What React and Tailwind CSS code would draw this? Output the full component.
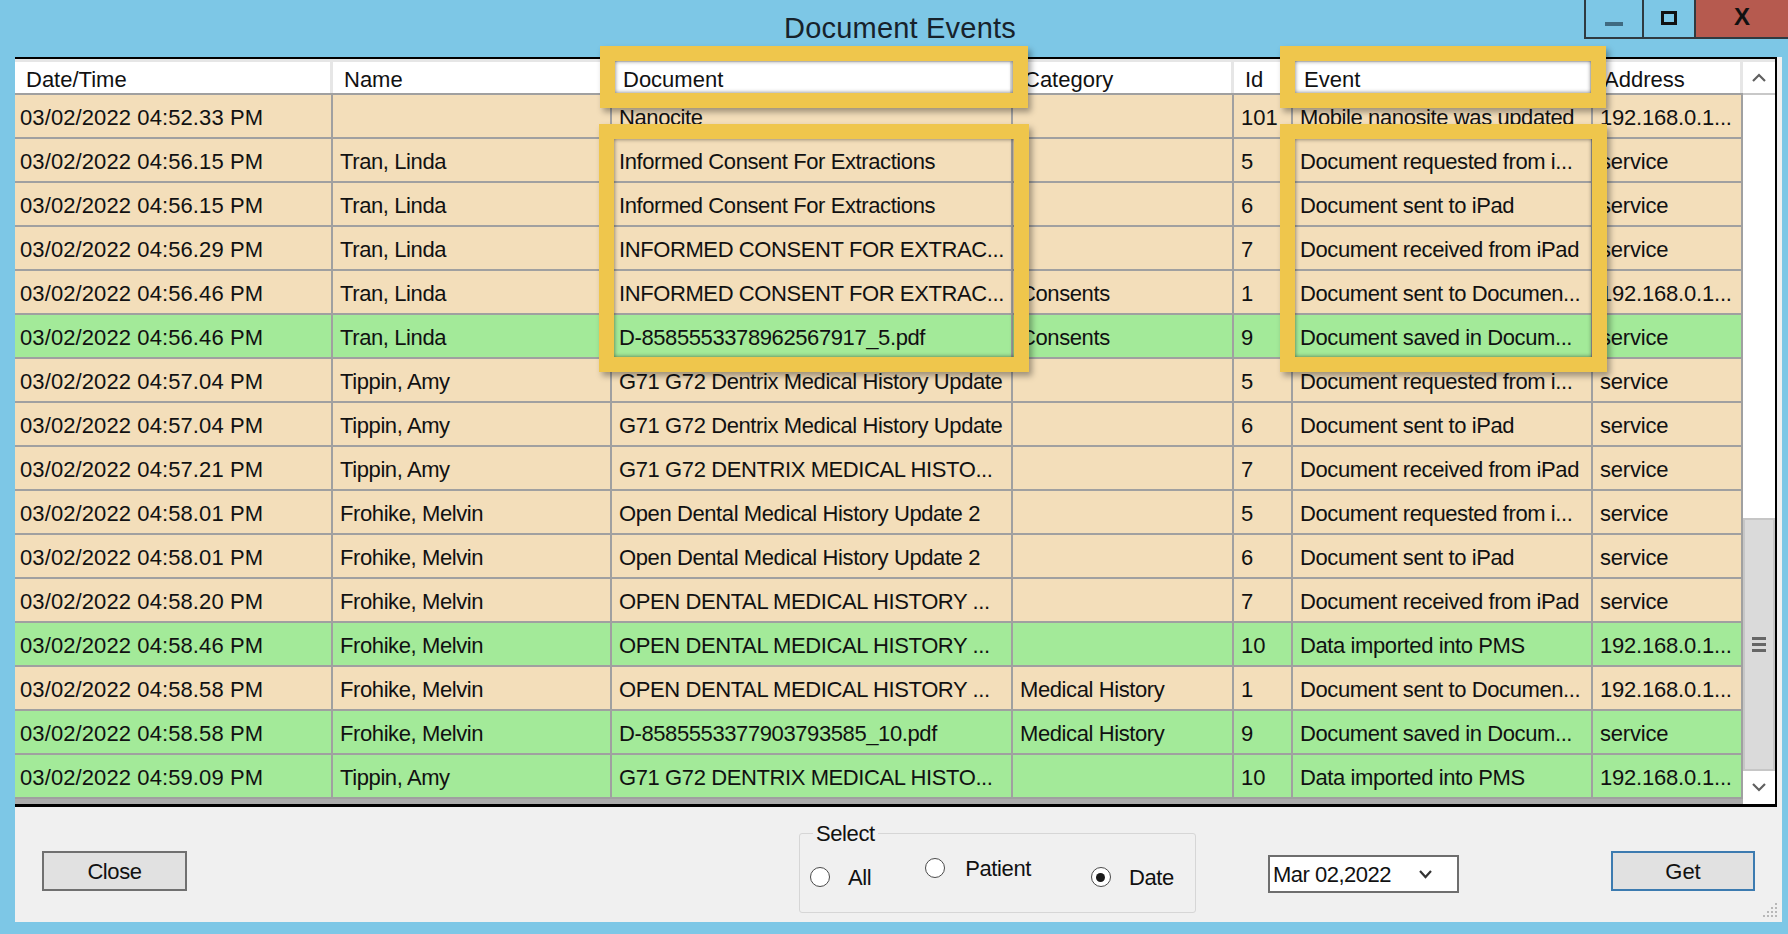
import React from 'react';

const rows = [
  { t: '03/02/2022 04:52.33 PM', n: '', d: 'Nanocite', c: '', id: '101', e: 'Mobile nanosite was updated', a: '192.168.0.1...', g: false },
  { t: '03/02/2022 04:56.15 PM', n: 'Tran, Linda', d: 'Informed Consent For Extractions', c: '', id: '5', e: 'Document requested from i...', a: 'service', g: false },
  { t: '03/02/2022 04:56.15 PM', n: 'Tran, Linda', d: 'Informed Consent For Extractions', c: '', id: '6', e: 'Document sent to iPad', a: 'service', g: false },
  { t: '03/02/2022 04:56.29 PM', n: 'Tran, Linda', d: 'INFORMED CONSENT FOR EXTRAC...', c: '', id: '7', e: 'Document received from iPad', a: 'service', g: false },
  { t: '03/02/2022 04:56.46 PM', n: 'Tran, Linda', d: 'INFORMED CONSENT FOR EXTRAC...', c: 'Consents', id: '1', e: 'Document sent to Documen...', a: '192.168.0.1...', g: false },
  { t: '03/02/2022 04:56.46 PM', n: 'Tran, Linda', d: 'D-8585553378962567917_5.pdf', c: 'Consents', id: '9', e: 'Document saved in Docum...', a: 'service', g: true },
  { t: '03/02/2022 04:57.04 PM', n: 'Tippin, Amy', d: 'G71 G72 Dentrix Medical History Update', c: '', id: '5', e: 'Document requested from i...', a: 'service', g: false },
  { t: '03/02/2022 04:57.04 PM', n: 'Tippin, Amy', d: 'G71 G72 Dentrix Medical History Update', c: '', id: '6', e: 'Document sent to iPad', a: 'service', g: false },
  { t: '03/02/2022 04:57.21 PM', n: 'Tippin, Amy', d: 'G71 G72 DENTRIX MEDICAL HISTO...', c: '', id: '7', e: 'Document received from iPad', a: 'service', g: false },
  { t: '03/02/2022 04:58.01 PM', n: 'Frohike, Melvin', d: 'Open Dental Medical History Update 2', c: '', id: '5', e: 'Document requested from i...', a: 'service', g: false },
  { t: '03/02/2022 04:58.01 PM', n: 'Frohike, Melvin', d: 'Open Dental Medical History Update 2', c: '', id: '6', e: 'Document sent to iPad', a: 'service', g: false },
  { t: '03/02/2022 04:58.20 PM', n: 'Frohike, Melvin', d: 'OPEN DENTAL MEDICAL HISTORY ...', c: '', id: '7', e: 'Document received from iPad', a: 'service', g: false },
  { t: '03/02/2022 04:58.46 PM', n: 'Frohike, Melvin', d: 'OPEN DENTAL MEDICAL HISTORY ...', c: '', id: '10', e: 'Data imported into PMS', a: '192.168.0.1...', g: true },
  { t: '03/02/2022 04:58.58 PM', n: 'Frohike, Melvin', d: 'OPEN DENTAL MEDICAL HISTORY ...', c: 'Medical History', id: '1', e: 'Document sent to Documen...', a: '192.168.0.1...', g: false },
  { t: '03/02/2022 04:58.58 PM', n: 'Frohike, Melvin', d: 'D-8585553377903793585_10.pdf', c: 'Medical History', id: '9', e: 'Document saved in Docum...', a: 'service', g: true },
  { t: '03/02/2022 04:59.09 PM', n: 'Tippin, Amy', d: 'G71 G72 DENTRIX MEDICAL HISTO...', c: '', id: '10', e: 'Data imported into PMS', a: '192.168.0.1...', g: true },
];

const cols = [
  { k: 't', w: 'w-[318px]', h: 'Date/Time', p: 'pl-[5px] tracking-[0.1px]' },
  { k: 'n', w: 'w-[279px]', h: 'Name', p: 'pl-[7px] tracking-[-0.4px]' },
  { k: 'd', w: 'w-[401px]', h: 'Document', p: 'pl-[7px] tracking-[-0.4px]' },
  { k: 'c', w: 'w-[221px]', h: 'Category', p: 'pl-[7px] tracking-[-0.4px]' },
  { k: 'id', w: 'w-[59px]', h: 'Id', p: 'pl-[7px]' },
  { k: 'e', w: 'w-[300px]', h: 'Event', p: 'pl-[7px] tracking-[-0.4px]' },
  { k: 'a', w: 'w-[150px]', h: 'Address', p: 'pl-[7px] tracking-[-0.2px]' },
];

function Radio({ checked }) {
  return (
    <span className="w-[20px] h-[20px] rounded-full border border-[#4a4a4a] bg-white flex items-center justify-center shrink-0">
      {checked && <span className="w-[9px] h-[9px] rounded-full bg-[#1a1a1a]" />}
    </span>
  );
}

function Highlight({ cls }) {
  return (
    <div
      className={`absolute border-[15px] border-[#EFC64C] shadow-[3px_4px_6px_rgba(0,0,0,0.35),inset_0_0_4px_rgba(0,0,0,0.55)] pointer-events-none ${cls}`}
    />
  );
}

export default function App() {
  return (
    <div className="relative w-[1788px] h-[934px] bg-[#7DC7E6] overflow-hidden flex flex-col font-['Liberation_Sans',Arial,sans-serif] text-[22px] text-[#111]">
      {/* Title bar */}
      <div className="h-[57px] flex shrink-0">
        <div className="w-[204px]" />
        <div className="flex-1 flex justify-center pt-[11px] pl-[12px]">
          <span className="text-[29px] leading-[34px] text-[#17222b] tracking-[0.2px]">Document Events</span>
        </div>
        <div className="w-[204px] h-[39px] flex border-l-2 border-b-2 border-[#2f3a40]">
          <div className="w-[56px] h-full flex items-end justify-center pb-[11px]">
            <div className="w-[18px] h-[4px] bg-[#3f6a80]" />
          </div>
          <div className="w-[52px] h-full border-l-2 border-[#2f3a40] flex items-center justify-center">
            <div className="w-[16px] h-[14px] border-[3px] border-[#111] mb-[2px]" />
          </div>
          <div className="flex-1 h-full border-l-2 border-[#2f3a40] bg-[#B65A4F] flex items-center justify-center">
            <span className="text-[24px] font-bold leading-none text-[#111] mb-[3px]">X</span>
          </div>
        </div>
      </div>

      {/* Window content */}
      <div className="flex-1 ml-[15px] mr-[6px] mb-[12px] bg-[#F0F0F0] flex flex-col">
        {/* Grid */}
        <div className="h-[750px] mr-[5px] border-t-2 border-b-[3px] border-r-2 border-black flex shrink-0">
          <div className="flex-1 flex flex-col bg-[#ABABAB]">
            <div className="h-[36px] flex bg-[#E6E6E6] border-b-2 border-[#A0A0A0] pt-[3px]">
              {cols.map((c) => (
                <div key={c.k} className={`${c.w} h-full bg-white border-r-[3px] border-[#E6E6E6] flex items-center pl-[11px] pt-[3px] whitespace-nowrap overflow-hidden`}>
                  {c.h}
                </div>
              ))}
            </div>
            {rows.map((r, i) => (
              <div key={i} className={`h-[44px] flex border-b-2 border-[#A0A0A0] ${r.g ? 'bg-[#A3EA99]' : 'bg-[#F3DEBA]'}`}>
                {cols.map((c) => (
                  <div key={c.k} className={`${c.w} ${c.p} h-full border-r-2 border-[#A0A0A0] flex items-center pt-[2px] whitespace-nowrap overflow-hidden`}>
                    {r[c.k]}
                  </div>
                ))}
              </div>
            ))}
          </div>
          {/* Scrollbar */}
          <div className="w-[32px] flex flex-col bg-white">
            <div className="h-[36px] border-t-[3px] border-[#E6E6E6] border-b-2 border-b-[#C8C8C8] bg-white flex items-center justify-center">
              <svg width="14" height="9" viewBox="0 0 14 9"><polyline points="1,8 7,2 13,8" fill="none" stroke="#606060" strokeWidth="2.2" /></svg>
            </div>
            <div className="h-[423px] bg-white" />
            <div className="flex-1 bg-[#DADADA] border-2 border-[#C6C6C6] flex flex-col items-center justify-center gap-[3px]">
              <div className="w-[14px] h-[3px] bg-[#666]" />
              <div className="w-[14px] h-[3px] bg-[#666]" />
              <div className="w-[14px] h-[3px] bg-[#666]" />
            </div>
            <div className="h-[33px] bg-white flex items-center justify-center">
              <svg width="14" height="9" viewBox="0 0 14 9"><polyline points="1,1 7,7 13,1" fill="none" stroke="#606060" strokeWidth="2.2" /></svg>
            </div>
          </div>
        </div>

        {/* Bottom panel */}
        <div className="relative flex-1 flex items-start">
          <button className="ml-[27px] mt-[44px] w-[145px] h-[40px] bg-[#E1E1E1] border-2 border-[#707070] flex items-center justify-center text-[#111] tracking-[-0.4px]">
            Close
          </button>

          <fieldset className="ml-[612px] mt-[14px] w-[397px] h-[92px] border border-[#D6D6D6] rounded-[3px] px-0 pb-0">
            <legend className="ml-[13px] px-[3px] leading-[25px] tracking-[-0.4px]">Select</legend>
            <div className="flex items-start tracking-[-0.4px]">
              <label className="ml-[10px] mt-[19px] flex items-center gap-[18px] h-[24px]">
                <Radio />
                <span>All</span>
              </label>
              <label className="ml-[54px] mt-[10px] flex items-center gap-[20px] h-[24px]">
                <Radio />
                <span>Patient</span>
              </label>
              <label className="ml-[60px] mt-[19px] flex items-center gap-[18px] h-[24px]">
                <Radio checked />
                <span>Date</span>
              </label>
            </div>
          </fieldset>

          <div className="ml-[72px] mt-[48px] w-[191px] h-[38px] bg-white border-2 border-[#6E6E6E] flex items-center">
            <span className="ml-[3px] w-[118px] whitespace-nowrap tracking-[-0.5px]">Mar 02,2022</span>
            <span className="ml-[28px] flex items-center">
              <svg width="13" height="9" viewBox="0 0 13 9"><polyline points="1,1 6.5,7 12,1" fill="none" stroke="#333" strokeWidth="2.2" /></svg>
            </span>
          </div>

          <button className="ml-[152px] mt-[44px] w-[144px] h-[40px] bg-[#E1E1E1] border-2 border-[#3C7BB0] flex items-center justify-center text-[#111]">
            Get
          </button>

          <svg className="absolute right-[4px] bottom-[4px]" width="16" height="16" viewBox="0 0 16 16">
            {[[13, 1], [13, 5], [9, 5], [13, 9], [9, 9], [5, 9], [13, 13], [9, 13], [5, 13], [1, 13]].map(([x, y], i) => (
              <rect key={i} x={x} y={y} width="2" height="2" fill="#B8B8B8" />
            ))}
          </svg>
        </div>
      </div>

      {/* Yellow annotation frames */}
      <Highlight cls="left-[600px] top-[46px] w-[428px] h-[62px]" />
      <Highlight cls="left-[599px] top-[124px] w-[430px] h-[248px]" />
      <Highlight cls="left-[1280px] top-[46px] w-[326px] h-[62px]" />
      <Highlight cls="left-[1280px] top-[124px] w-[327px] h-[248px]" />
    </div>
  );
}
